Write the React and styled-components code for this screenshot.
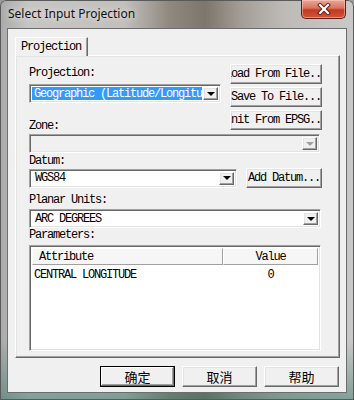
import React from "react";
import styled, { createGlobalStyle, css } from "styled-components";

const mono = `"Liberation Mono", "DejaVu Sans Mono", monospace`;
const cjk = `"Noto Sans CJK SC", "Noto Sans", sans-serif`;

const GlobalStyle = createGlobalStyle`
  html, body { margin: 0; padding: 0; background: #9a9a9a; }
  * { box-sizing: border-box; }
`;

const raised = css`
  border-top: 1px solid #ffffff;
  border-left: 1px solid #ffffff;
  border-right: 1px solid #696969;
  border-bottom: 1px solid #696969;
  box-shadow: inset -1px -1px 0 #a0a0a0, inset 1px 1px 0 #e3e3e3;
`;

const sunken = css`
  border-top: 1px solid #a0a0a0;
  border-left: 1px solid #a0a0a0;
  border-right: 1px solid #ffffff;
  border-bottom: 1px solid #ffffff;
  box-shadow: inset 1px 1px 0 #696969, inset -1px -1px 0 #e3e3e3;
`;

const Window = styled.div`
  width: 354px;
  height: 400px;
  display: flex;
  flex-direction: column;
  padding: 0 7px 7px;
  border-radius: 6px 6px 0 0;
  background:
    linear-gradient(to bottom, rgba(0, 0, 0, 0) 85%, rgba(40, 110, 95, 0.45) 100%),
    linear-gradient(to right, #a9a9a9 0%, #c6c6c4 8%, #c2c0bd 35%, #8f887e 48%, #7d766c 58%, #a39d96 68%, #bdbab6 80%, #c9c9c9 100%);
  box-shadow: inset 0 0 0 1px #5a5a5a;
`;

const TitleBar = styled.div`
  height: 28px;
  display: flex;
  justify-content: space-between;
  align-items: flex-start;
`;

const Title = styled.div`
  padding: 7px 0 0 1px;
  font-family: "Noto Sans", "Open Sans", sans-serif;
  font-size: 12px;
  line-height: 14px;
  color: #111;
  text-shadow: 0 0 6px rgba(255, 255, 255, 0.9);
`;

const CloseButton = styled.div`
  width: 45px;
  height: 19px;
  margin-right: 1px;
  display: flex;
  align-items: center;
  justify-content: center;
  border: 1px solid #5b1e14;
  border-top: none;
  border-radius: 0 0 5px 5px;
  background: linear-gradient(to bottom, #e9a89a 0%, #d8735f 45%, #c23a22 55%, #d0533a 100%);
  box-shadow: inset 0 0 0 1px rgba(255, 210, 200, 0.5);
`;

const Client = styled.div`
  flex: 1;
  display: flex;
  flex-direction: column;
  background: #f0f0f0;
  border: 1px solid #6d6d6d;
  padding: 8px 6px 5px 7px;
`;

const TabStrip = styled.div`
  display: flex;
  margin-bottom: -1px;
  position: relative;
  z-index: 1;
`;

const Tab = styled.div`
  height: 19px;
  padding: 3px 6px 0 5px;
  background: #f0f0f0;
  border-top: 1px solid #ffffff;
  border-left: 1px solid #ffffff;
  border-right: 1px solid #696969;
  box-shadow: inset -1px 0 0 #a0a0a0;
  font-family: ${mono};
  font-size: 12px;
  letter-spacing: -1.2px;
  line-height: 12px;
  color: #000;
`;

const Panel = styled.div`
  flex: 1;
  display: flex;
  flex-direction: column;
  padding: 8px 17px 6px 13px;
  ${raised};
`;

const Label = styled.div`
  margin-top: ${(p) => p.$mt || 0}px;
  height: 12px;
  font-family: ${mono};
  font-size: 12px;
  letter-spacing: -1.2px;
  line-height: 12px;
  color: #000;
  white-space: nowrap;
`;

const TopRow = styled.div`
  display: flex;
  justify-content: space-between;
  align-items: flex-start;
`;

const LeftCol = styled.div`
  display: flex;
  flex-direction: column;
`;

const RightCol = styled.div`
  width: 92px;
  display: flex;
  flex-direction: column;
  gap: 3px;
`;

const Button = styled.div`
  width: ${(p) => p.$w || 92}px;
  height: 20px;
  display: flex;
  align-items: center;
  justify-content: center;
  overflow: hidden;
  white-space: nowrap;
  background: #f0f0f0;
  font-family: ${mono};
  font-size: 12px;
  letter-spacing: -1.2px;
  color: #000;
  ${raised};
`;

const Combo = styled.div`
  width: ${(p) => (p.$w ? `${p.$w}px` : "auto")};
  height: 19px;
  margin-top: ${(p) => p.$mt || 0}px;
  margin-right: ${(p) => p.$mr || 0}px;
  display: flex;
  padding: 2px;
  background: ${(p) => (p.$disabled ? "#f0f0f0" : "#ffffff")};
  ${sunken};
`;

const Field = styled.div`
  flex: 1;
  min-width: 0;
  overflow: hidden;
  white-space: nowrap;
  display: flex;
  align-items: center;
  padding-left: ${(p) => (p.$selected ? 2 : 3)}px;
  margin: ${(p) => (p.$selected ? "0 1px 0 0" : "0")};
  background: ${(p) => (p.$selected ? "#3399ff" : "transparent")};
  color: ${(p) => (p.$selected ? "#ffffff" : "#000000")};
  font-family: ${mono};
  font-size: 12px;
  letter-spacing: -1.2px;
`;

const ArrowButton = styled.div`
  width: 15px;
  display: flex;
  align-items: center;
  justify-content: center;
  background: #f0f0f0;
  ${raised};
`;

const Arrow = styled.div`
  width: 0;
  height: 0;
  border-left: 4px solid transparent;
  border-right: 4px solid transparent;
  border-top: 4px solid ${(p) => (p.$disabled ? "#a0a0a0" : "#000")};
`;

const DatumRow = styled.div`
  margin-top: 1px;
  display: flex;
  justify-content: space-between;
  align-items: center;
`;

const List = styled.div`
  flex: 1;
  margin-top: 4px;
  margin-right: 1px;
  display: flex;
  flex-direction: column;
  background: #ffffff;
  padding: 2px;
  ${sunken};
`;

const HeaderRow = styled.div`
  display: grid;
  grid-template-columns: 191px 1fr;
  height: 17px;
`;

const HeaderCell = styled.div`
  display: flex;
  align-items: center;
  justify-content: ${(p) => (p.$center ? "center" : "flex-start")};
  padding-left: ${(p) => (p.$center ? 0 : 6)}px;
  background: #f6f6f6;
  border-right: 1px solid #a0a0a0;
  border-bottom: 1px solid #a0a0a0;
  border-top: 1px solid #ffffff;
  border-left: 1px solid #ffffff;
  font-family: ${mono};
  font-size: 12px;
  letter-spacing: -1.2px;
  color: #000;
`;

const DataRow = styled.div`
  display: grid;
  grid-template-columns: 191px 1fr;
  height: 16px;
  margin-top: 2px;
`;

const DataCell = styled.div`
  display: flex;
  align-items: center;
  justify-content: ${(p) => (p.$center ? "center" : "flex-start")};
  padding-left: ${(p) => (p.$center ? 0 : 2)}px;
  font-family: ${mono};
  font-size: 12px;
  letter-spacing: -1.2px;
  color: #000;
`;

const ButtonBar = styled.div`
  margin-top: 8px;
  padding-right: 1px;
  display: flex;
  justify-content: flex-end;
  gap: 7px;
`;

const DialogButton = styled.div`
  width: 75px;
  height: 21px;
  display: flex;
  align-items: center;
  justify-content: center;
  background: #f0f0f0;
  font-family: ${cjk};
  font-size: 13px;
  color: #000;
  ${raised};
  ${(p) =>
    p.$default &&
    css`
      border: 1px solid #000;
      box-shadow: inset -1px -1px 0 #696969, inset 1px 1px 0 #ffffff, inset -2px -2px 0 #a0a0a0;
    `}
`;

function ComboBox({ value, w, mt, mr, selected, disabled }) {
  return (
    <Combo $w={w} $mt={mt} $mr={mr} $disabled={disabled}>
      <Field $selected={selected}>{value}</Field>
      <ArrowButton>
        <Arrow $disabled={disabled} />
      </ArrowButton>
    </Combo>
  );
}

export default function App() {
  return (
    <>
      <GlobalStyle />
      <Window>
        <TitleBar>
          <Title>Select Input Projection</Title>
          <CloseButton>
            <svg width="14" height="12" viewBox="0 0 14 12">
              <path d="M3 2 L11 10 M11 2 L3 10" stroke="#5a1a10" strokeWidth="4" strokeLinecap="square" />
              <path d="M3 2 L11 10 M11 2 L3 10" stroke="#ffffff" strokeWidth="2.2" strokeLinecap="square" />
            </svg>
          </CloseButton>
        </TitleBar>
        <Client>
          <TabStrip>
            <Tab>Projection</Tab>
          </TabStrip>
          <Panel>
            <TopRow>
              <LeftCol>
                <Label $mt={3}>Projection:</Label>
                <ComboBox w={192} mt={5} selected value="Geographic (Latitude/Longitude)" />
                <Label $mt={17}>Zone:</Label>
              </LeftCol>
              <RightCol>
                <Button>Load From File...</Button>
                <Button>Save To File...</Button>
                <Button>Init From EPSG...</Button>
              </RightCol>
            </TopRow>
            <ComboBox mt={2} mr={2} disabled value="" />
            <Label $mt={2}>Datum:</Label>
            <DatumRow>
              <ComboBox w={208} value="WGS84" />
              <Button $w={76}>Add Datum...</Button>
            </DatumRow>
            <Label $mt={6}>Planar Units:</Label>
            <ComboBox mt={3} mr={1} value="ARC DEGREES" />
            <Label $mt={1}>Parameters:</Label>
            <List>
              <HeaderRow>
                <HeaderCell>Attribute</HeaderCell>
                <HeaderCell $center>Value</HeaderCell>
              </HeaderRow>
              <DataRow>
                <DataCell>CENTRAL LONGITUDE</DataCell>
                <DataCell $center>0</DataCell>
              </DataRow>
            </List>
          </Panel>
          <ButtonBar>
            <DialogButton $default>确定</DialogButton>
            <DialogButton>取消</DialogButton>
            <DialogButton>帮助</DialogButton>
          </ButtonBar>
        </Client>
      </Window>
    </>
  );
}
